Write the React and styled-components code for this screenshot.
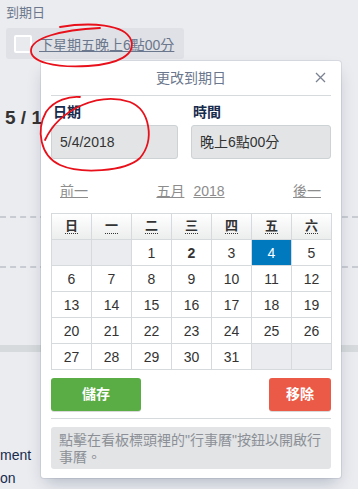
import React from 'react';
import styled, { createGlobalStyle } from 'styled-components';

const SANS = `"Liberation Sans", "Noto Sans CJK TC", sans-serif`;

const GlobalStyle = createGlobalStyle`
  html, body {
    margin: 0;
    padding: 0;
    background: #ebecf0;
    font-family: ${SANS};
  }
`;

const Page = styled.div`
  position: relative;
  width: 358px;
  height: 489px;
  overflow: hidden;
  background: #ebecf0;
  color: #172b4d;
`;

const Backdrop = styled.div`
  display: flex;
  flex-direction: column;
`;

const FieldLabel = styled.div`
  margin: 5px 0 0 6px;
  font-size: 13px;
  line-height: 16px;
  color: #6b778c;
`;

const Badge = styled.div`
  display: flex;
  align-items: center;
  gap: 7px;
  width: 178px;
  height: 31px;
  box-sizing: border-box;
  margin: 7px 0 0 6px;
  padding: 0 8px;
  background: #dfe1e6;
  border-radius: 3px;
`;

const Check = styled.span`
  width: 18px;
  height: 18px;
  box-sizing: border-box;
  border: 2px solid #fff;
  border-radius: 2px;
  background: #e9eaed;
`;

const BadgeText = styled.span`
  font-size: 14px;
  color: #6b778c;
  text-decoration: underline;
  white-space: nowrap;
`;

const Heading = styled.div`
  margin: 47px 0 0 5px;
  font-size: 19px;
  font-weight: bold;
  line-height: 24px;
  color: #333;
  white-space: nowrap;
`;

const Dashed = styled.div`
  height: 0;
  border-top: 2px dashed #c8ccd2;
  margin-top: ${p => p.$gap}px;
`;

const Bar = styled.div`
  height: 7px;
  background: #d6dadc;
  margin-top: 77px;
`;

const Tail = styled.div`
  margin-top: ${p => p.$gap}px;
  font-size: 14px;
  line-height: 16px;
  color: #172b4d;
`;

const Popover = styled.div`
  position: absolute;
  left: 41px;
  top: 61px;
  width: 300px;
  background: #fff;
  border-radius: 3px;
  box-shadow: 0 8px 16px -4px rgba(9, 30, 66, 0.25), 0 0 0 1px rgba(9, 30, 66, 0.08);
`;

const PopHeader = styled.div`
  position: relative;
  height: 34px;
  margin: 0 10px;
  border-bottom: 1px solid #d6dadc;
  text-align: center;
  line-height: 34px;
  font-size: 14px;
  color: #6b778c;
`;

const Close = styled.span`
  position: absolute;
  right: 5px;
  top: 11px;
  width: 11px;
  height: 11px;
  display: flex;
`;

const PopBody = styled.div`
  padding: 6px 10px 9px;
`;

const Fields = styled.div`
  display: grid;
  grid-template-columns: 127px 140px;
  column-gap: 13px;
`;

const Label = styled.div`
  font-size: 14px;
  font-weight: bold;
  line-height: 20px;
  padding-left: 2px;
  margin-bottom: 3px;
  color: #172b4d;
`;

const Input = styled.div`
  height: 34px;
  box-sizing: border-box;
  padding: 0 8px;
  line-height: 32px;
  background: #e2e4e6;
  border: 1px solid #cdd2d4;
  border-radius: 3px;
  font-size: 14px;
  color: #333;
`;

const Nav = styled.div`
  display: flex;
  justify-content: space-between;
  align-items: center;
  margin-top: 22px;
  padding: 0 10px 0 9px;
  line-height: 20px;
  font-size: 14px;
`;

const NavLink = styled.span`
  color: #8c8c8c;
  text-decoration: underline;
  & + & { margin-left: 9px; }
`;

const Calendar = styled.div`
  margin-top: 12px;
  display: grid;
  grid-template-columns: repeat(7, 39px);
  grid-auto-rows: 25px;
  gap: 1px;
  width: 281px;
  box-sizing: border-box;
  border: 1px solid #d6dadc;
  background: #d6dadc;
`;

const HeadCell = styled.div`
  display: flex;
  align-items: center;
  justify-content: center;
  background: linear-gradient(#ffffff, #eceded);
  font-size: 13px;
  font-weight: bold;
  color: #333;
`;

const Abbr = styled.span`
  border-bottom: 1px dotted #333;
  line-height: 14px;
`;

const DayCell = styled.div`
  display: flex;
  align-items: center;
  justify-content: center;
  font-size: 14px;
  color: ${p => (p.$selected ? '#fff' : '#333')};
  font-weight: ${p => (p.$today ? 'bold' : 'normal')};
  background: ${p => (p.$empty ? '#ebecf0' : p.$selected ? '#0079bf' : '#fff')};
`;

const Actions = styled.div`
  display: flex;
  justify-content: space-between;
  margin-top: 8px;
`;

const Button = styled.div`
  width: ${p => p.$w}px;
  height: 33px;
  line-height: 33px;
  text-align: center;
  border-radius: 3px;
  background: ${p => p.$bg};
  box-shadow: 0 1px 0 rgba(0, 0, 0, 0.15);
  color: #fff;
  font-size: 14px;
  font-weight: bold;
`;

const Divider = styled.div`
  height: 1px;
  background: #d6dadc;
  margin-top: 7px;
`;

const Note = styled.div`
  margin-top: 8px;
  padding: 5px 4px 3px 8px;
  background: #e2e4e6;
  border-radius: 3px;
  font-size: 14px;
  line-height: 17px;
  color: #8c9096;
`;

const Marks = styled.svg`
  position: absolute;
  left: 0;
  top: 0;
  pointer-events: none;
`;

const WEEK = ['日', '一', '二', '三', '四', '五', '六'];
const DAYS = [null, null, 1, 2, 3, 4, 5, 6, 7, 8, 9, 10, 11, 12, 13, 14, 15, 16, 17, 18, 19, 20, 21, 22, 23, 24, 25, 26, 27, 28, 29, 30, 31, null, null];

export default function App() {
  return (
    <Page>
      <GlobalStyle />
      <Backdrop>
        <FieldLabel>到期日</FieldLabel>
        <Badge>
          <Check />
          <BadgeText>下星期五晚上6點00分</BadgeText>
        </Badge>
        <Heading>5 / 1</Heading>
        <Dashed $gap={86} />
        <Dashed $gap={48} />
        <Bar />
        <Tail $gap={95}>ment</Tail>
        <Tail $gap={7}>on</Tail>
      </Backdrop>

      <Popover>
        <PopHeader>
          更改到期日
          <Close>
            <svg width="11" height="11" viewBox="0 0 11 11">
              <path d="M1 1L10 10M10 1L1 10" stroke="#7a8291" strokeWidth="1.3" />
            </svg>
          </Close>
        </PopHeader>
        <PopBody>
          <Fields>
            <div>
              <Label>日期</Label>
              <Input>5/4/2018</Input>
            </div>
            <div>
              <Label>時間</Label>
              <Input>晚上6點00分</Input>
            </div>
          </Fields>
          <Nav>
            <NavLink>前一</NavLink>
            <span>
              <NavLink>五月</NavLink>
              <NavLink>2018</NavLink>
            </span>
            <NavLink>後一</NavLink>
          </Nav>
          <Calendar>
            {WEEK.map(w => (
              <HeadCell key={w}><Abbr>{w}</Abbr></HeadCell>
            ))}
            {DAYS.map((d, i) => (
              <DayCell key={i} $empty={d === null} $selected={d === 4} $today={d === 2}>
                {d}
              </DayCell>
            ))}
          </Calendar>
          <Actions>
            <Button $w={90} $bg="#5aac44">儲存</Button>
            <Button $w={62} $bg="#eb5a46">移除</Button>
          </Actions>
          <Divider />
          <Note>點擊在看板標頭裡的"行事曆"按鈕以開啟行事曆。</Note>
        </PopBody>
      </Popover>

      <Marks width="358" height="489" viewBox="0 0 358 489">
        <path
          d="M60 27 C90 22 125 24 131 40 C136 55 118 64 88 66 C55 68 30 62 31 50 C32 38 60 30 100 28"
          fill="none" stroke="#e8101a" strokeWidth="1.8" strokeLinecap="round"
        />
        <path
          d="M45 140 C60 108 100 92 130 102 C150 110 155 140 140 158 C125 172 80 174 60 165 C40 156 36 130 46 112 C54 100 70 96 80 97"
          fill="none" stroke="#e8101a" strokeWidth="1.8" strokeLinecap="round"
        />
      </Marks>
    </Page>
  );
}
